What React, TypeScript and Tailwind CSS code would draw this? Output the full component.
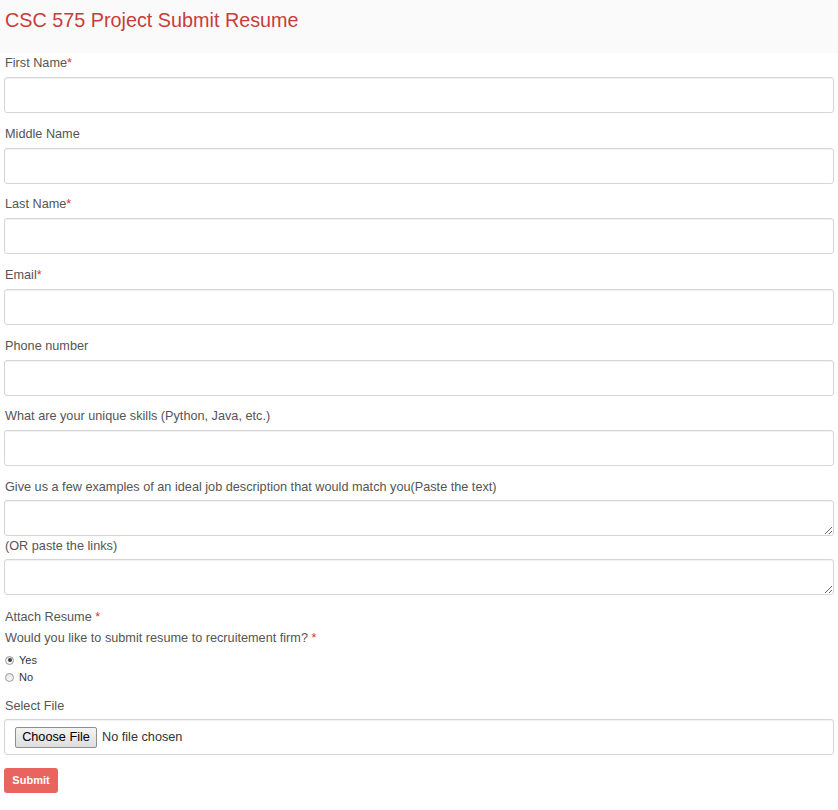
import React from "react";

const font = { fontFamily: '"Liberation Sans", Arial, sans-serif' };

function Label({ text, req, className = "" }: { text: string; req?: boolean; className?: string }) {
  return (
    <div className={"h-[20px] leading-[20px] text-[12.7px] text-[#555] whitespace-nowrap " + className}>
      {text}
      {req && <span className="text-[#e0312c]">*</span>}
    </div>
  );
}

function Input() {
  return (
    <div className="h-[36px] w-full rounded-[3px] border border-[#d6d6d6] bg-white shadow-[inset_0_1px_1px_rgba(0,0,0,0.06)]" />
  );
}

function Area() {
  return (
    <textarea className="block h-[36px] w-full rounded-[3px] border border-[#d6d6d6] bg-white shadow-[inset_0_1px_1px_rgba(0,0,0,0.06)] outline-none" />
  );
}

function Radio({ checked, label }: { checked?: boolean; label: string }) {
  return (
    <div className="flex h-[17px] items-center text-[11px] text-[#333]">
      <span className="ml-[1px] mr-[5px] flex h-[9px] w-[9px] items-center justify-center rounded-full border border-[#9a9a9a] bg-gradient-to-b from-[#e4e4e4] to-[#fafafa]">
        {checked && <span className="h-[4px] w-[4px] rounded-full bg-[#444]" />}
      </span>
      {label}
    </div>
  );
}

export default function App() {
  const fields: { t: string; r?: boolean }[] = [
    { t: "First Name", r: true },
    { t: "Middle Name" },
    { t: "Last Name", r: true },
    { t: "Email", r: true },
    { t: "Phone number" },
    { t: "What are your unique skills (Python, Java, etc.)" },
  ];
  return (
    <div className="min-h-[810px] w-[838px] bg-white" style={font}>
      <div className="h-[53px] bg-[#fafafa] px-[5px] pt-[6px] text-[19.8px] leading-[28px] text-[#c83d3a]">
        CSC 575 Project Submit Resume
      </div>
      <div className="bg-white pl-[4px] pr-[4px] pb-[17px]">
        {fields.map((f) => (
          <div key={f.t} className="mb-[10.67px]">
            <Label text={f.t} req={f.r} className="mb-[4px] pl-[1px]" />
            <Input />
          </div>
        ))}
        <Label text="Give us a few examples of an ideal job description that would match you(Paste the text)" className="mb-[3px] pl-[1px]" />
        <Area />
        <Label text="(OR paste the links)" className="mb-[3px] pl-[1px]" />
        <Area />
        <div className="mt-[12px] h-[20px] pl-[1px] text-[12.7px] leading-[20px] text-[#555]">
          Attach Resume <span className="text-[#e0312c]">*</span>
        </div>
        <div className="mt-[1px] h-[20px] pl-[1px] text-[12.7px] leading-[20px] text-[#555]">
          Would you like to submit resume to recruitement firm? <span className="text-[#e0312c]">*</span>
        </div>
        <div className="mt-[4px]">
          <Radio checked label="Yes" />
          <Radio label="No" />
        </div>
        <Label text="Select File" className="mt-[10.5px] mb-[3px] pl-[1px]" />
        <div className="flex h-[36px] w-full items-center rounded-[3px] border border-[#d6d6d6] bg-white pl-[10px] shadow-[inset_0_1px_1px_rgba(0,0,0,0.06)]">
          <span className="flex h-[21px] w-[82px] items-center justify-center rounded-[2px] border border-[#8f8f8f] bg-gradient-to-b from-[#f3f3f3] to-[#dedede] text-[12.7px] text-black">
            Choose File
          </span>
          <span className="ml-[5px] text-[12.7px] text-[#333]">No file chosen</span>
        </div>
        <div className="mt-[12.5px] flex h-[25px] w-[54px] items-center justify-center rounded-[3px] bg-[#e9635f] text-[11px] font-bold text-white">
          Submit
        </div>
      </div>
    </div>
  );
}
